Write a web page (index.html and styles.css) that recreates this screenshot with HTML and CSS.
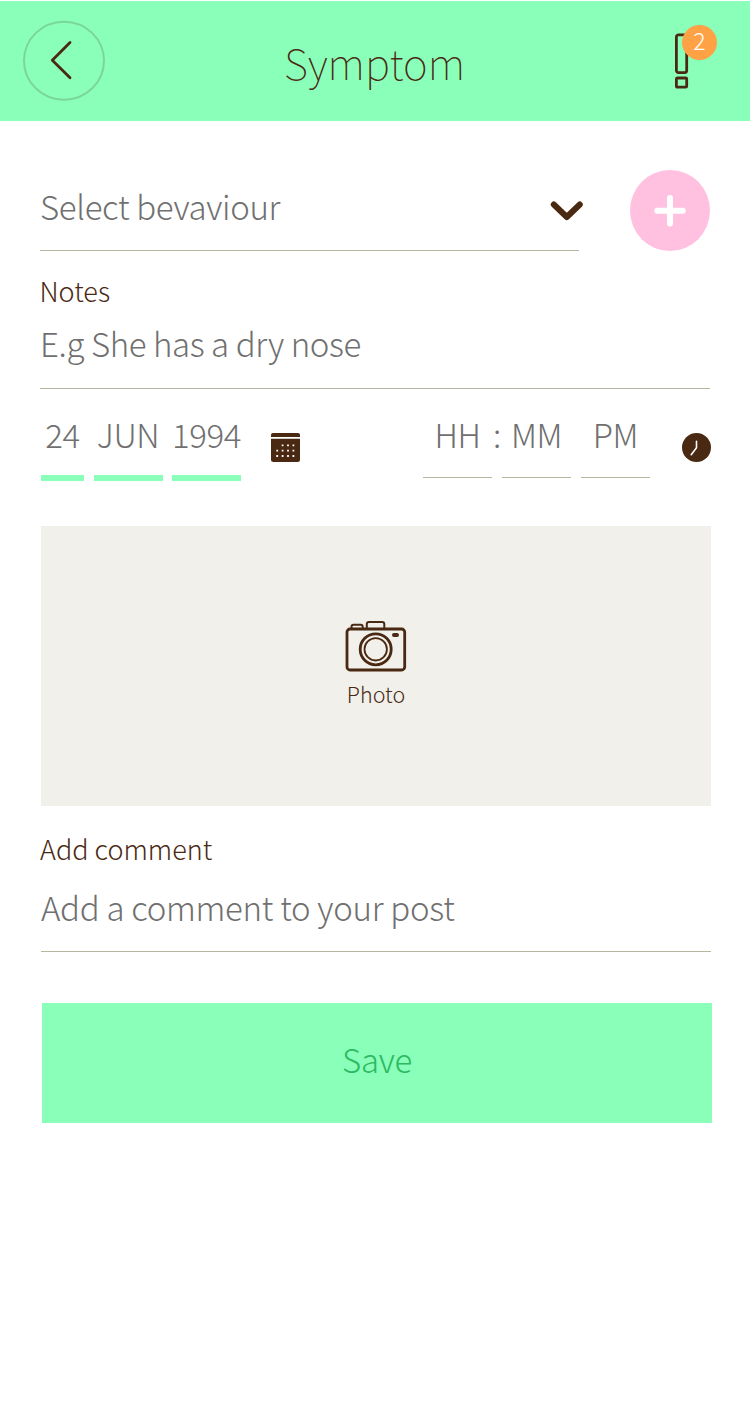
FILE: index.html
```html
<!DOCTYPE html>
<html lang="en">
<head>
<meta charset="utf-8">
<title>Symptom</title>
<link rel="stylesheet" href="styles.css">
</head>
<body>
<header class="topbar">
  <button class="back" aria-label="Back">
    <svg width="84" height="84" viewBox="0 0 84 84" fill="none"><ellipse cx="42" cy="41.7" rx="40" ry="39" stroke="#7bd69b" stroke-width="2"/><path d="M48 23.500 30.300 41.200 48 58.700" stroke="#4a2912" stroke-width="2.8" stroke-linecap="round" stroke-linejoin="round"/></svg>
  </button>
  <h1 class="title"><span>Symptom</span></h1>
  <div class="alert">
    <svg width="16" height="60" viewBox="0 0 16 60" fill="none" stroke="#4a2912" stroke-width="2.8"><rect x="2.400" y="4.900" width="10.300" height="37.700" rx="2"/><rect x="2.400" y="48" width="10.300" height="9.200" rx="1"/></svg>
    <span class="badge">2</span>
  </div>
</header>
<main class="form">
  <div class="behaviour">
    <div class="field select"><span class="value t-select">Select bevaviour</span>
      <svg class="chevron" width="34" height="22" viewBox="0 0 34 22"><path d="M3.800 4.500 16.800 17 29.800 4.500" fill="none" stroke="#4a2912" stroke-width="6" stroke-linecap="round" stroke-linejoin="round"/></svg>
    </div>
    <button class="add" aria-label="Add"><svg width="32" height="32" viewBox="0 0 32 32"><path d="M16 3v25.500M3.300 15.700h25.500" stroke="#fff" stroke-width="6" stroke-linecap="round"/></svg></button>
  </div>
  <label class="label l-notes"><span>Notes</span></label>
  <div class="field notes"><span class="value t-notes">E.g She has a dry nose</span></div>
  <div class="when">
    <span class="part set day"><span>24</span></span>
    <span class="part set month"><span>JUN</span></span>
    <span class="part set year"><span>1994</span></span>
    <svg class="calendar" width="29" height="30" viewBox="0 0 29 30"><path d="M0 4V2Q0 0 2 0H27Q29 0 29 2V4Z" fill="#4a2912"/><path d="M0 5.800H29V26.500Q29 29 26.500 29H2.500Q0 29 0 26.500Z" fill="#4a2912"/><g stroke="#fff" stroke-width="1.800" stroke-dasharray="1.800 3.600"><path d="M10.700 12.300H24"/><path d="M5.300 17.600H24"/><path d="M5.300 23H24"/></g></svg>
    <span class="part hour"><span>HH</span></span>
    <span class="colon">:</span>
    <span class="part minute"><span>MM</span></span>
    <span class="part period"><span>PM</span></span>
    <svg class="clock" width="30" height="30" viewBox="0 0 30 30"><circle cx="15.500" cy="14.500" r="14.500" fill="#4a2912"/><path d="M15.500 8.300V14.800L10.200 21.700" fill="none" stroke="#fff" stroke-width="1.600" stroke-linecap="round"/></svg>
  </div>
  <div class="photo">
    <svg width="62" height="52" viewBox="0 0 62 52" fill="none" stroke="#4a2912" stroke-width="2.800"><rect x="2" y="9" width="57.700" height="41" rx="3"/><path d="M6.500 9V6.700Q6.500 4.700 8.500 4.700H15.700Q17.700 4.700 17.700 6.700V9M21.800 9V4Q21.800 1.900 24 1.900H37Q39.300 1.900 39.300 4V9" stroke-width="2"/><circle cx="30.700" cy="29.300" r="15.500" stroke-width="2.800"/><circle cx="30.700" cy="29.300" r="11.200" stroke-width="1.800"/><rect x="47" y="13" width="7" height="4" rx="2" fill="#4a2912" stroke="none"/></svg>
    <span class="caption">Photo</span>
  </div>
  <label class="label l-comment"><span>Add comment</span></label>
  <div class="field comment"><span class="value t-comment">Add a comment to your post</span></div>
  <button class="save"><span>Save</span></button>
</main>
</body>
</html>
```
FILE: styles.css
```css
* { box-sizing: border-box; }
body { margin: 0; background: #fff; font-family: "Noto Sans CJK SC", "Noto Sans", sans-serif; font-weight: 300; color: #4a2912; white-space: nowrap; }
button { border: 0; padding: 0; background: none; font: inherit; }
svg { display: block; flex: none; }
.topbar { display: flex; margin-top: 1px; height: 120px; background: #8affb9; padding: 18px 0 0 22px; }
.back { width: 84px; height: 84px; }
.title { width: 537px; margin: 15px 1px 0 0; text-align: center; font-size: 42px; line-height: 56px; font-weight: 100; }
.alert { position: relative; margin: 11px 0 0 30px; width: 42px; }
.badge { position: absolute; left: 8px; top: -5px; width: 35px; height: 35px; border-radius: 50%; background: #ffa245; color: #fff; font-size: 23px; line-height: 31px; text-align: center; }
.form { padding: 48px 38px 0 40px; }
.behaviour { display: flex; justify-content: space-between; height: 82px; padding-right: 2px; }
.field { display: flex; border-bottom: 1px solid #b8b6a0; font-size: 33px; line-height: 40px; color: #707070; }
.select { width: 539px; padding-top: 17px; justify-content: space-between; }
.t-select { letter-spacing: -0.33px; }
.t-notes { letter-spacing: -0.38px; }
.t-comment { letter-spacing: -0.29px; }
.chevron { margin: 14px -5px 0 0; }
.add { display: flex; align-items: center; justify-content: center; width: 80px; height: 81px; margin-top: 1px; border-radius: 50%; background: #ffc1df; }
.label { display: block; font-size: 27px; line-height: 32px; }
.l-notes { margin: 24px 0 0 -0.5px; }
.notes { width: 670px; height: 82px; padding-top: 16px; }
.when { display: flex; height: 91px; padding: 25px 0 0 1px; font-size: 33px; line-height: 40px; color: #707070; }
.part { height: 64px; text-align: center; border-bottom: 1px solid #b8b6a0; width: 69px; letter-spacing: -0.4px; }
.set { height: 66.5px; border-bottom: 6px solid #8affb9; }
.day { width: 43px; margin-right: 9.5px; }
.month { margin-right: 9.5px; }
.calendar { margin: 19px 123px 0 30px; }
.colon { width: 10px; text-align: center; }
.period { margin-left: 10px; }
.clock { margin: 19px 0 0 31px; }
.photo { display: flex; flex-direction: column; align-items: center; width: 670px; height: 280px; margin: 46px 0 0 1px; padding-top: 94px; background: #f1f0eb; }
.caption { font-size: 21.5px; line-height: 30px; margin-top: 7px; }
.l-comment { margin-top: 27px; }
.comment { width: 670px; margin-left: 1px; height: 87px; padding-top: 22px; }
.save { display: block; width: 670px; height: 120px; margin: 51px 0 0 2px; padding-bottom: 9px; background: #8affb9; color: #2cb961; font-size: 33px; letter-spacing: -0.3px; text-align: center; }
```
